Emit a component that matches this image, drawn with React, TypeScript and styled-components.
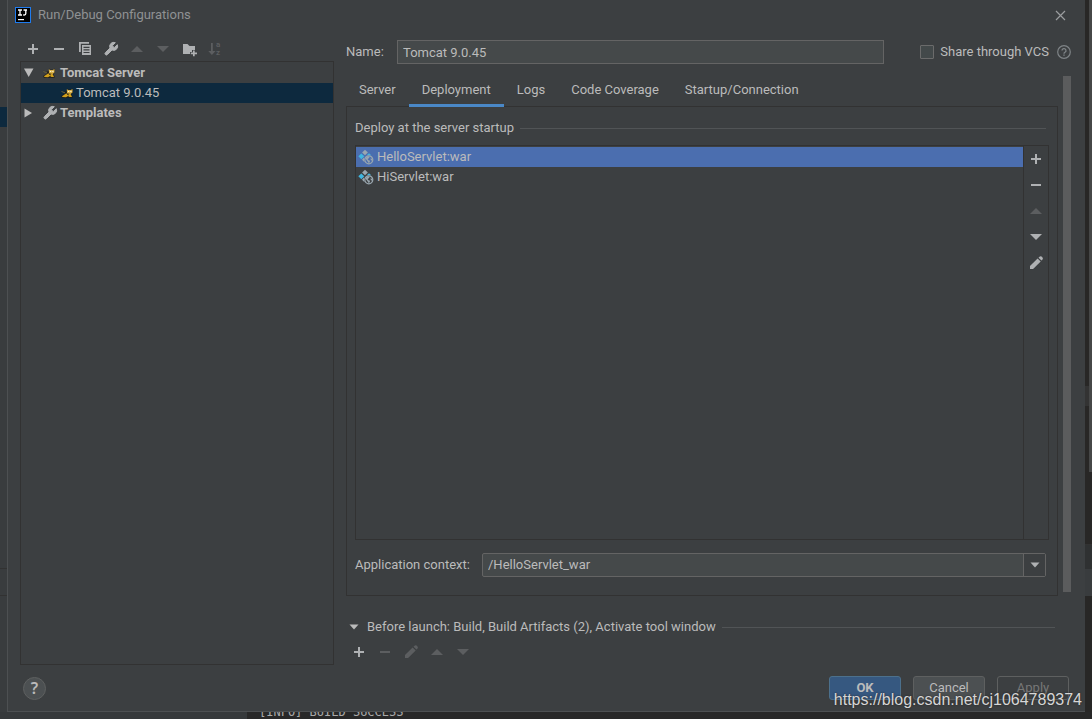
import React from 'react';
import styled, { createGlobalStyle, css } from 'styled-components';

const c = {
  panel: '#3c3f41',
  text: '#bbbbbb',
  icon: '#afb1b3',
  iconOff: '#5c5e60',
  border: '#323232',
  line: '#515456',
  field: '#45494a',
  fieldBorder: '#646464',
  selection: '#4b6eaf',
  treeSelection: '#0d293e',
  accent: '#4a88c7',
};

const GlobalStyle = createGlobalStyle`
  *, *::before, *::after { box-sizing: border-box; }
  body {
    margin: 0;
    background: #2b2b2b;
    color: ${c.text};
    font: 13px/20px Roboto, "Noto Sans", sans-serif;
  }
  button, input, select { font: inherit; color: inherit; margin: 0; }
  button { padding: 0; border: 0; background: none; }
  ul { list-style: none; margin: 0; padding: 0; }
  svg { display: block; flex: none; overflow: visible; }
`;

/* ---------- page frame ---------- */

const Page = styled.div`
  position: relative;
  min-height: 100vh;
  display: grid;
  grid-template-columns: 7px minmax(0, 1fr) 7px;
  grid-template-rows: 1fr 7px;
  overflow: hidden;
`;

const Strip = styled.div<{ $bg: string }>`
  display: flex;
  flex-direction: column;
  background: ${(p) => p.$bg};
`;

const StripBand = styled.div<{ $height: number; $bg?: string; $lined?: boolean; $thumb?: boolean }>`
  flex: none;
  height: ${(p) => p.$height}px;
  background: ${(p) => p.$bg ?? 'transparent'};
  border-top: ${(p) => (p.$lined ? '1px solid #323232' : '0')};
  border-right: ${(p) => (p.$thumb ? '3px solid #464747' : '0')};
`;

const Console = styled.div`
  grid-column: 1 / -1;
  display: flex;
  align-items: flex-end;
  overflow: hidden;
  background: #282828;
`;

const ConsoleGutter = styled.div`
  width: 247px;
  align-self: stretch;
  background: #36393b;
`;

const ConsoleText = styled.div`
  padding-left: 12px;
  color: #a9a9a9;
  font: 12px/14px "DejaVu Sans Mono", monospace;
  white-space: pre;
`;

const Dialog = styled.main`
  display: flex;
  flex-direction: column;
  min-width: 0;
  background: ${c.panel};
  border: solid #4d5052;
  border-width: 0 0 1px 1px;
`;

const TitleBar = styled.header`
  height: 30px;
  display: flex;
  align-items: center;
  gap: 7px;
  padding: 0 19px 0 7px;
  color: #8f9193;
`;

const Title = styled.h1`
  flex: 1;
  margin: 0;
  font: inherit;
`;

const Body = styled.div`
  flex: 1;
  display: flex;
  gap: 12px;
  padding: 0 14px 0 12px;
`;

const Footer = styled.footer`
  display: flex;
  align-items: center;
  gap: 12px;
  padding: 11px 16px 11px 15px;
`;

/* ---------- shared controls ---------- */

const Toolbar = styled.div<{ $vertical?: boolean }>`
  display: flex;
  flex-direction: ${(p) => (p.$vertical ? 'column' : 'row')};
`;

const ToolButton = styled.button<{ $tall?: boolean }>`
  width: ${(p) => (p.$tall ? 24 : 26)}px;
  height: ${(p) => (p.$tall ? 26 : 16)}px;
  display: flex;
  align-items: center;
  justify-content: center;
  color: ${c.icon};
  &:disabled { color: ${c.iconOff}; }
`;

const PlainButton = styled.button`
  display: flex;
  align-items: center;
  color: ${c.icon};
`;

const Rule = styled.hr`
  flex: 1;
  height: 1px;
  margin: 0;
  border: 0;
  background: ${c.line};
`;

/* ---------- configuration tree ---------- */

const Sidebar = styled.aside`
  flex: none;
  width: 314px;
  display: flex;
  flex-direction: column;
`;

const SideToolbar = styled(Toolbar)`
  padding: 11px 0 4px;
`;

const Tree = styled.ul`
  flex: 1;
  border: 1px solid ${c.border};
  padding-top: 1px;
`;

const TreeRow = styled.li<{ $child?: boolean; $selected?: boolean }>`
  height: 20px;
  display: flex;
  align-items: center;
  gap: ${(p) => (p.$child ? 0 : 2)}px;
  padding-left: ${(p) => (p.$child ? 38 : 2)}px;
  font-weight: ${(p) => (p.$child ? 400 : 700)};
  background: ${(p) => (p.$selected ? c.treeSelection : 'transparent')};
`;

const TreeIcon = styled.span`
  display: flex;
  margin-left: 1px;
  color: ${c.icon};
`;

/* ---------- editor side ---------- */

const Editor = styled.section`
  flex: 1;
  min-width: 0;
  display: flex;
  flex-direction: column;
  padding-top: 10px;
`;

const NameRow = styled.div`
  display: flex;
  align-items: center;
  height: 24px;
  margin-bottom: 12px;
`;

const NameLabel = styled.label`
  width: 51px;
`;

const TextField = styled.input`
  flex: 1;
  min-width: 0;
  height: 24px;
  padding: 0 5px;
  background: ${c.field};
  border: 1px solid ${c.fieldBorder};
  outline: none;
`;

const ShareLabel = styled.label`
  display: flex;
  align-items: center;
  gap: 6px;
  margin: 0 8px 0 36px;
`;

const CheckBox = styled.input`
  appearance: none;
  width: 14px;
  height: 14px;
  background: #43494a;
  border: 1px solid #6b6b6b;
  border-radius: 1px;
`;

const ScrollArea = styled.div`
  flex: 1;
  display: flex;
  gap: 5px;
`;

const ScrollThumb = styled.div`
  width: 8px;
  margin-bottom: 4px;
  background: #5b5c5d;
`;

const TabPane = styled.div`
  flex: 1;
  min-width: 0;
  display: flex;
  flex-direction: column;
`;

const TabBar = styled.div`
  display: flex;
  height: 31px;
  margin-bottom: -1px;
  z-index: 1;
`;

const Tab = styled.button<{ $active?: boolean }>`
  padding: 0 13px;
  border-bottom: 3px solid transparent;
  ${(p) => p.$active && css`border-bottom-color: ${c.accent};`}
`;

const Panel = styled.div`
  flex: 1;
  display: flex;
  flex-direction: column;
  padding: 11px 8px 18px;
  border: 1px solid ${c.border};
`;

const Heading = styled.div`
  display: flex;
  align-items: center;
  gap: 6px;
  margin-right: 3px;
`;

const Artifacts = styled.div`
  flex: 1;
  display: flex;
  margin: 7px 0 13px;
  border: 1px solid ${c.border};
`;

const ArtifactList = styled.ul`
  flex: 1;
  padding-top: 1px;
  border-right: 1px solid ${c.border};
`;

const ArtifactRow = styled.li<{ $selected?: boolean }>`
  height: 20px;
  display: flex;
  align-items: center;
  gap: 3px;
  padding-left: 2px;
  background: ${(p) => (p.$selected ? c.selection : 'transparent')};
`;

const ContextRow = styled.div`
  display: flex;
  align-items: center;
  margin-right: 3px;
`;

const ContextLabel = styled.label`
  width: 127px;
`;

const Combo = styled.div`
  position: relative;
  flex: 1;
`;

const ComboSelect = styled.select`
  appearance: none;
  display: block;
  width: 100%;
  height: 24px;
  padding: 0 28px 0 5px;
  background: ${c.field};
  border: 1px solid ${c.fieldBorder};
  border-radius: 2px;
  outline: none;
`;

const ComboArrow = styled.span`
  position: absolute;
  top: 1px;
  right: 1px;
  bottom: 1px;
  width: 22px;
  display: flex;
  align-items: center;
  justify-content: center;
  background: ${c.panel};
  border-left: 1px solid ${c.fieldBorder};
  color: ${c.icon};
  pointer-events: none;
`;

const LaunchHeading = styled.div`
  display: flex;
  align-items: center;
  gap: 6px;
  margin: 21px 16px 7px 0;
`;

const LaunchToggle = styled(PlainButton)`
  gap: 5px;
  color: ${c.text};
`;

const LaunchToolbar = styled(Toolbar)`
  padding-bottom: 5px;
`;

/* ---------- footer ---------- */

const HelpButton = styled.button`
  width: 23px;
  height: 23px;
  margin-right: auto;
  border: 1px solid #5e6060;
  border-radius: 50%;
  background: #4c5052;
  font: 600 16px/20px "Noto Sans", sans-serif;
`;

const DialogButton = styled.button<{ $primary?: boolean }>`
  width: 72px;
  height: 24px;
  background: #4c5052;
  border: 1px solid #5e6060;
  border-radius: 3px;
  ${(p) => p.$primary && css`
    background: #365880;
    border-color: #4c708c;
    font-weight: 700;
  `}
  &:disabled {
    background: none;
    color: #777777;
  }
`;

const Watermark = styled.div`
  position: absolute;
  right: 10px;
  bottom: 9px;
  color: #d6d6d6;
  font: 16px/20px "Liberation Sans", Arial, sans-serif;
  text-shadow: 0 0 2px #222222;
`;

/* ---------- icons ---------- */

type IconProps = { size?: number; children: React.ReactNode; box?: number };

const Icon = ({ size = 16, box = 16, children }: IconProps) => (
  <svg width={size} height={size} viewBox={`0 0 ${box} ${box}`} fill="currentColor" aria-hidden="true">
    {children}
  </svg>
);

const AddIcon = () => <Icon><path d="M7 3h2v4h4v2H9v4H7V9H3V7h4z" /></Icon>;
const RemoveIcon = () => <Icon><path d="M3 7h10v2H3z" /></Icon>;
const UpIcon = () => <Icon><path d="M2 11l6-6 6 6z" /></Icon>;
const DownIcon = () => <Icon><path d="M2 5h12l-6 6z" /></Icon>;
const SmallDownIcon = () => <Icon><path d="M3.500 5.500h9L8 10.500z" /></Icon>;
const ExpandedIcon = () => <Icon><path d="M1 3.500h9.500L5.700 12z" /></Icon>;
const CollapsedIcon = () => <Icon><path d="M1.500 3.500l7.500 4.500-7.500 4.500z" /></Icon>;

const CopyIcon = () => (
  <Icon>
    <path d="M2 1h10v1.800H3.800V11H2z" />
    <path fillRule="evenodd" d="M5 4h9v10H5zM6.500 5.700v1.200h6V5.700zm0 2.600v1.200h6V8.300zm0 2.600v1.200h6v-1.200z" />
  </Icon>
);

const WrenchIcon = () => (
  <Icon box={24}>
    <path d="M14.700 6.300a1 1 0 0 0 0 1.400l1.600 1.600a1 1 0 0 0 1.400 0l3.770-3.770a6 6 0 0 1-7.940 7.940l-6.910 6.910a2.120 2.120 0 0 1-3-3l6.910-6.910a6 6 0 0 1 7.940-7.940z" stroke="currentColor" strokeWidth="1.500" />
  </Icon>
);

const FolderAddIcon = () => (
  <Icon>
    <path d="M2 3h4.500l2 2H14v4h-3v2H9v2H2z" />
    <path d="M12 9.500h1.700v2H16v1.700h-2.300v2H12v-2h-2.200v-1.700H12z" />
  </Icon>
);

const SortIcon = () => (
  <Icon>
    <path d="M4 2h1.800v8H8.500L4.900 14 1.300 10H4z" />
    <text x="9" y="6" fontSize="8" fontWeight="700">a</text>
    <text x="9" y="14" fontSize="8" fontWeight="700">z</text>
  </Icon>
);

const PencilIcon = () => (
  <Icon>
    <path d="M2 11l7.600-7.600 3.100 3.100L5.100 14H2z" />
    <path d="M10.500 2.700l.7-.8a2.100 2.100 0 0 1 3 3l-.7.700z" />
  </Icon>
);

const CloseIcon = () => (
  <Icon size={11} box={11}>
    <path d="M1 1l9 9M10 1l-9 9" stroke="#9b9d9f" strokeWidth="1.200" />
  </Icon>
);

const HintIcon = () => (
  <Icon size={14} box={14}>
    <circle cx="7" cy="7" r="6.300" fill="none" stroke="#7f8487" strokeWidth="1.200" />
    <path d="M5 5.600a2 2 0 1 1 3 1.700c-.7.400-1 .7-1 1.400" fill="none" stroke="#7f8487" strokeWidth="1.300" />
    <path d="M6.300 9.500h1.400v1.300H6.300z" fill="#7f8487" />
  </Icon>
);

const AppLogo = () => (
  <Icon>
    <rect x=".5" y=".5" width="15" height="15" fill="#000" stroke="#1f7cf0" />
    <path d="M3 3h4M5 3v5M3 8h4M8.500 3H12M10.800 3v3.500q0 1.500-1.500 1.500H8.200" fill="none" stroke="#fff" strokeWidth="1.300" />
    <path d="M3 12h6v1.200H3z" fill="#fff" />
  </Icon>
);

const TomcatIcon = () => (
  <Icon>
    <path d="M1 5.500l3 1.500 3-1.200V3.500L8.500 4.500h3L13 3.500v4L11.500 9l1.500 3.500-2 .5H2L1 11l4-2.500z" fill="#1d1b14" opacity=".75" />
    <path d="M6.800 4.200l1.700.9h2.300l1.700-1v3.300L10.500 9 7 8z" fill="#d9b048" />
    <path d="M2 11.300l4-2.800 4.500.3 1.500 3.200H9.500L8 11l-2 1.200-3.500-.2z" fill="#d1a01c" />
    <path d="M8 5.900h1.200v1.200H8zM10.300 5.900h1.200v1.200h-1.200z" fill="#f8f2d2" />
    <path d="M7 9.200l2 .8" stroke="#1d1b14" strokeWidth=".8" />
    <path d="M1.500 6.500l3.500 1.300" stroke="#7b7040" strokeWidth=".8" />
  </Icon>
);

const ArtifactIcon = ({ selected }: { selected?: boolean }) => (
  <Icon>
    <path d="M7 .8l2.900 2.700L7 6.300 4.100 3.500z" fill="#9aa7b0" />
    <path d="M3.300 4.400l3 2.900-3 2.900-3-2.900z" fill="#40b6e0" />
    <path d="M11 4.200l2.300 2H8.700z" fill="#40b6e0" />
    <path d="M6 8.500L4 10.800l2.500 2.500z" fill="#9aa7b0" />
    <circle cx="10.800" cy="10.800" r="4" fill={selected ? '#4b6eaf' : '#3c3f41'} stroke="#9aa7b0" strokeWidth="1.200" />
    <path d="M7.500 9.500l1.700-2 2.300-.2-.3 1.700-1.700 1 1 1.200 1.700.6-1.200 2.600-1.500-2.200zM12.800 9l1.700 1.400-.6 1.400-1.300-1z" fill="#9aa7b0" />
  </Icon>
);

/* ---------- data ---------- */

type Tool = { label: string; icon: React.ReactNode; off?: boolean };

const sideTools: Tool[] = [
  { label: 'Add configuration', icon: <AddIcon /> },
  { label: 'Remove configuration', icon: <RemoveIcon /> },
  { label: 'Copy configuration', icon: <CopyIcon /> },
  { label: 'Edit templates', icon: <WrenchIcon /> },
  { label: 'Move up', icon: <UpIcon />, off: true },
  { label: 'Move down', icon: <DownIcon />, off: true },
  { label: 'Create folder', icon: <FolderAddIcon /> },
  { label: 'Sort configurations', icon: <SortIcon />, off: true },
];

const artifactTools: Tool[] = [
  { label: 'Add artifact', icon: <AddIcon /> },
  { label: 'Remove artifact', icon: <RemoveIcon /> },
  { label: 'Move artifact up', icon: <UpIcon />, off: true },
  { label: 'Move artifact down', icon: <DownIcon /> },
  { label: 'Edit artifact', icon: <PencilIcon /> },
];

const launchTools: Tool[] = [
  { label: 'Add task', icon: <AddIcon /> },
  { label: 'Remove task', icon: <RemoveIcon />, off: true },
  { label: 'Edit task', icon: <PencilIcon />, off: true },
  { label: 'Move task up', icon: <UpIcon />, off: true },
  { label: 'Move task down', icon: <DownIcon />, off: true },
];

const tabs = ['Server', 'Deployment', 'Logs', 'Code Coverage', 'Startup/Connection'];
const artifacts = ['HelloServlet:war', 'HiServlet:war'];

const Tools = ({ items, tall }: { items: Tool[]; tall?: boolean }) => (
  <>
    {items.map((t) => (
      <ToolButton key={t.label} type="button" aria-label={t.label} disabled={t.off} $tall={tall}>
        {t.icon}
      </ToolButton>
    ))}
  </>
);

export default function App() {
  const [tab, setTab] = React.useState('Deployment');
  const [artifact, setArtifact] = React.useState(artifacts[0]);

  return (
    <>
      <GlobalStyle />
      <Page>
        <Strip $bg="#393c3e">
          <StripBand $height={107} />
          <StripBand $height={20} $bg="#0d293e" />
          <StripBand $height={441} />
          <StripBand $height={27} $lined />
          <StripBand $height={20} $lined />
        </Strip>

        <Dialog>
          <TitleBar>
            <AppLogo />
            <Title>Run/Debug Configurations</Title>
            <PlainButton type="button" aria-label="Close"><CloseIcon /></PlainButton>
          </TitleBar>

          <Body>
            <Sidebar>
              <SideToolbar><Tools items={sideTools} /></SideToolbar>
              <Tree role="tree" aria-label="Configurations">
                <TreeRow role="treeitem" aria-expanded="true">
                  <ExpandedIcon />
                  <TreeIcon><TomcatIcon /></TreeIcon>
                  Tomcat Server
                </TreeRow>
                <TreeRow role="treeitem" aria-selected="true" $child $selected>
                  <TreeIcon><TomcatIcon /></TreeIcon>
                  Tomcat 9.0.45
                </TreeRow>
                <TreeRow role="treeitem" aria-expanded="false">
                  <CollapsedIcon />
                  <TreeIcon><WrenchIcon /></TreeIcon>
                  Templates
                </TreeRow>
              </Tree>
            </Sidebar>

            <Editor>
              <NameRow>
                <NameLabel htmlFor="name">Name:</NameLabel>
                <TextField id="name" type="text" defaultValue="Tomcat 9.0.45" />
                <ShareLabel>
                  <CheckBox type="checkbox" />
                  Share through VCS
                </ShareLabel>
                <PlainButton type="button" aria-label="About sharing"><HintIcon /></PlainButton>
              </NameRow>

              <ScrollArea>
                <TabPane>
                  <TabBar role="tablist">
                    {tabs.map((t) => (
                      <Tab key={t} type="button" role="tab" aria-selected={t === tab} $active={t === tab} onClick={() => setTab(t)}>
                        {t}
                      </Tab>
                    ))}
                  </TabBar>
                  <Panel role="tabpanel">
                    <Heading>
                      Deploy at the server startup
                      <Rule />
                    </Heading>
                    <Artifacts>
                      <ArtifactList role="listbox" aria-label="Artifacts">
                        {artifacts.map((a) => (
                          <ArtifactRow key={a} role="option" aria-selected={a === artifact} $selected={a === artifact} onClick={() => setArtifact(a)}>
                            <ArtifactIcon selected={a === artifact} />
                            {a}
                          </ArtifactRow>
                        ))}
                      </ArtifactList>
                      <Toolbar $vertical><Tools items={artifactTools} tall /></Toolbar>
                    </Artifacts>
                    <ContextRow>
                      <ContextLabel htmlFor="context">Application context:</ContextLabel>
                      <Combo>
                        <ComboSelect id="context" defaultValue="/HelloServlet_war">
                          <option>/HelloServlet_war</option>
                        </ComboSelect>
                        <ComboArrow><SmallDownIcon /></ComboArrow>
                      </Combo>
                    </ContextRow>
                  </Panel>
                </TabPane>
                <ScrollThumb />
              </ScrollArea>

              <LaunchHeading>
                <LaunchToggle type="button" aria-expanded="true">
                  <SmallDownIcon />
                  Before launch: Build, Build Artifacts (2), Activate tool window
                </LaunchToggle>
                <Rule />
              </LaunchHeading>
              <LaunchToolbar><Tools items={launchTools} /></LaunchToolbar>
            </Editor>
          </Body>

          <Footer>
            <HelpButton type="button" aria-label="Help">?</HelpButton>
            <DialogButton type="button" $primary>OK</DialogButton>
            <DialogButton type="button">Cancel</DialogButton>
            <DialogButton type="button" disabled>Apply</DialogButton>
          </Footer>
        </Dialog>

        <Strip $bg="#282726">
          <StripBand $height={386} $thumb />
          <StripBand $height={20} $bg="#333333" $thumb />
          <StripBand $height={66} $thumb />
          <StripBand $height={72} />
          <StripBand $height={25} $bg="#2f3132" $lined />
          <StripBand $height={27} $bg="#393c3e" />
        </Strip>

        <Console>
          <ConsoleGutter />
          <ConsoleText>[INFO] BUILD SUCCESS</ConsoleText>
        </Console>

        <Watermark>https://blog.csdn.net/cj1064789374</Watermark>
      </Page>
    </>
  );
}
